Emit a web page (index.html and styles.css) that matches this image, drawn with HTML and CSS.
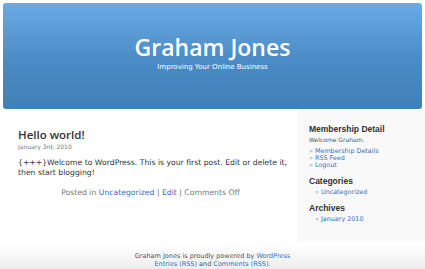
FILE: index.html
```html
<!DOCTYPE html>
<html lang="en">
<head>
  <meta charset="UTF-8">
  <title>Graham Jones</title>
  <meta name="viewport" content="width=device-width, initial-scale=1.0">
  <link rel="stylesheet" href="styles.css">
</head>
<body>
  <div id="page">
    <div id="header">
      <h1>Graham Jones</h1>
      <div class="description">Improving Your Online Business</div>
    </div>

    <div id="wrap">
      <div id="content">
        <div class="post">
          <h2>Hello world!</h2>
          <small>January 3rd, 2010</small>
          <p>{+++}Welcome to WordPress. This is your first post. Edit or delete it, then start blogging!</p>
          <p class="postmetadata">Posted in <a href="#">Uncategorized</a> | <a href="#">Edit</a> | Comments Off</p>
        </div>
      </div>

      <div id="sidebar">
        <h3>Membership Detail</h3>
        <p class="welcome">Welcome Graham.</p>
        <ul class="flat">
          <li>» <a href="#">Membership Details</a></li>
          <li>» <a href="#">RSS Feed</a></li>
          <li>» <a href="#">Logout</a></li>
        </ul>
        <h3>Categories</h3>
        <ul>
          <li>» <a href="#">Uncategorized</a></li>
        </ul>
        <h3>Archives</h3>
        <ul>
          <li>» <a href="#">January 2010</a></li>
        </ul>
      </div>
    </div>

    <div id="footer">
      <p>Graham Jones is proudly powered by <a href="#">WordPress</a><br>
      <a href="#">Entries (RSS)</a> and <a href="#">Comments (RSS)</a>.</p>
    </div>
  </div>
</body>
</html>
```

FILE: styles.css
```css
body {
  margin: 0;
  padding: 0;
  background: #fff;
  font-family: "DejaVu Sans", Verdana, sans-serif;
  color: #333;
}
a {
  color: #3371c4;
  text-decoration: none;
}
#page {
  width: 425px;
}
#header {
  margin: 3px 3px 0;
  height: 106px;
  border-radius: 3px;
  background: linear-gradient(#69abe5, #4a8bc6 55%, #4180b5);
  color: #fff;
  text-align: center;
  padding-top: 32px;
  box-sizing: border-box;
}
#header h1 {
  margin: 0;
  font-family: "Open Sans", sans-serif;
  font-weight: 600;
  font-size: 23px;
  line-height: 24px;
}
#header .description {
  font-size: 7px;
  line-height: 8px;
  margin-top: 4px;
}
#wrap {
  display: flex;
  margin-top: 1px;
}
#content {
  flex: 1;
  padding: 18px 6px 0 18px;
}
.post h2 {
  margin: 0;
  font-family: "Open Sans", sans-serif;
  font-size: 11.5px;
  font-weight: 600;
  color: #333;
  line-height: 14px;
}
.post small {
  display: block;
  font-size: 6px;
  color: #777;
  margin-top: 1px;
}
.post p {
  font-size: 7.7px;
  line-height: 10px;
  margin: 8px 0 0;
}
.post p.postmetadata {
  text-align: center;
  color: #777;
  margin-top: 10px;
  padding-right: 8px;
}
#sidebar {
  width: 128px;
  height: 131px;
  background: #f9f9f9;
  padding: 14px 0 0 12px;
  box-sizing: border-box;
}
#sidebar h3 {
  margin: 0;
  font-family: "Liberation Sans", Arial, sans-serif;
  font-size: 8.5px;
  font-weight: bold;
  color: #333;
  line-height: 11px;
}
#sidebar .welcome {
  margin: 1px 0 5px;
  font-size: 6px;
  color: #555;
}
#sidebar ul {
  list-style: none;
  margin: 2px 0 7px;
  padding: 0 0 0 6px;
  font-size: 6.4px;
  line-height: 7px;
  color: #999;
}
#sidebar ul.flat {
  padding-left: 0;
  margin-top: 0;
  margin-bottom: 7px;
}
#footer {
  margin-top: 3px;
  height: 27px;
  background: linear-gradient(#fff, #ececec);
  text-align: center;
  font-size: 6.5px;
  color: #555;
}
#footer p {
  margin: 0;
  padding-top: 8px;
  line-height: 8px;
}
```
